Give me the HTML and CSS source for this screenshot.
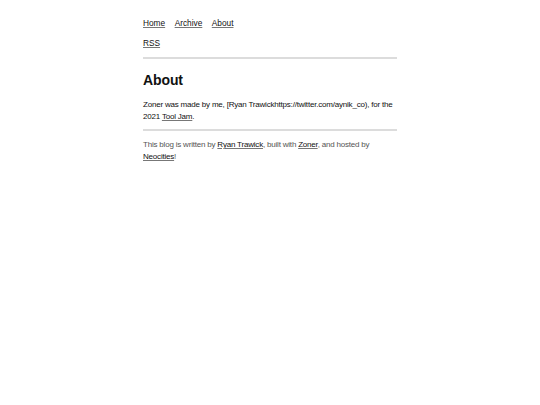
FILE: index.html
```html
<!DOCTYPE html>
<html>
<head>
<meta charset="utf-8">
<title>About</title>
<link rel="stylesheet" href="styles.css">
</head>
<body>
<div class="page">
  <nav class="nav">
    <div class="nav-row"><a href="#">Home</a><a href="#">Archive</a><a href="#">About</a></div>
    <div class="nav-row"><a href="#">RSS</a></div>
  </nav>
  <hr class="rule">
  <main>
    <h1 class="title">About</h1>
    <p class="text">Zoner was made by me, [Ryan Trawickhttps://twitter.com/aynik_co), for the 2021 <a href="#">Tool Jam</a>.</p>
  </main>
  <hr class="rule">
  <footer class="footer">
    <p class="text">This blog is written by <a href="#">Ryan Trawick</a>, built with <a href="#">Zoner</a>, and hosted by <a href="#">Neocities</a>!</p>
  </footer>
</div>
</body>
</html>
```
FILE: styles.css
```css
html, body {
  margin: 0;
  padding: 0;
  background: #fff;
}
body {
  font-family: "Liberation Sans", Arial, sans-serif;
  font-size: 8px;
  line-height: 12px;
  color: #111;
}
.page {
  width: 254px;
  margin: 0 auto;
  padding-top: 17px;
}
a {
  color: #111;
  text-decoration: underline;
  text-decoration-color: #777;
}
.nav-row {
  display: flex;
  gap: 9.5px;
  margin-bottom: 8px;
  font-size: 8.3px;
}
.rule {
  border: 0;
  height: 2px;
  background: #dcdcdc;
  margin: 0;
}
.title {
  font-size: 14px;
  line-height: 16px;
  font-weight: bold;
  letter-spacing: -0.1px;
  margin: 13px 0 0;
}
.text {
  margin: 0;
  letter-spacing: -0.2px;
}
main .text {
  margin-top: 11px;
  margin-bottom: 6px;
}
.footer {
  color: #555;
  padding-top: 8px;
}
.footer a {
  color: #111;
}
```
